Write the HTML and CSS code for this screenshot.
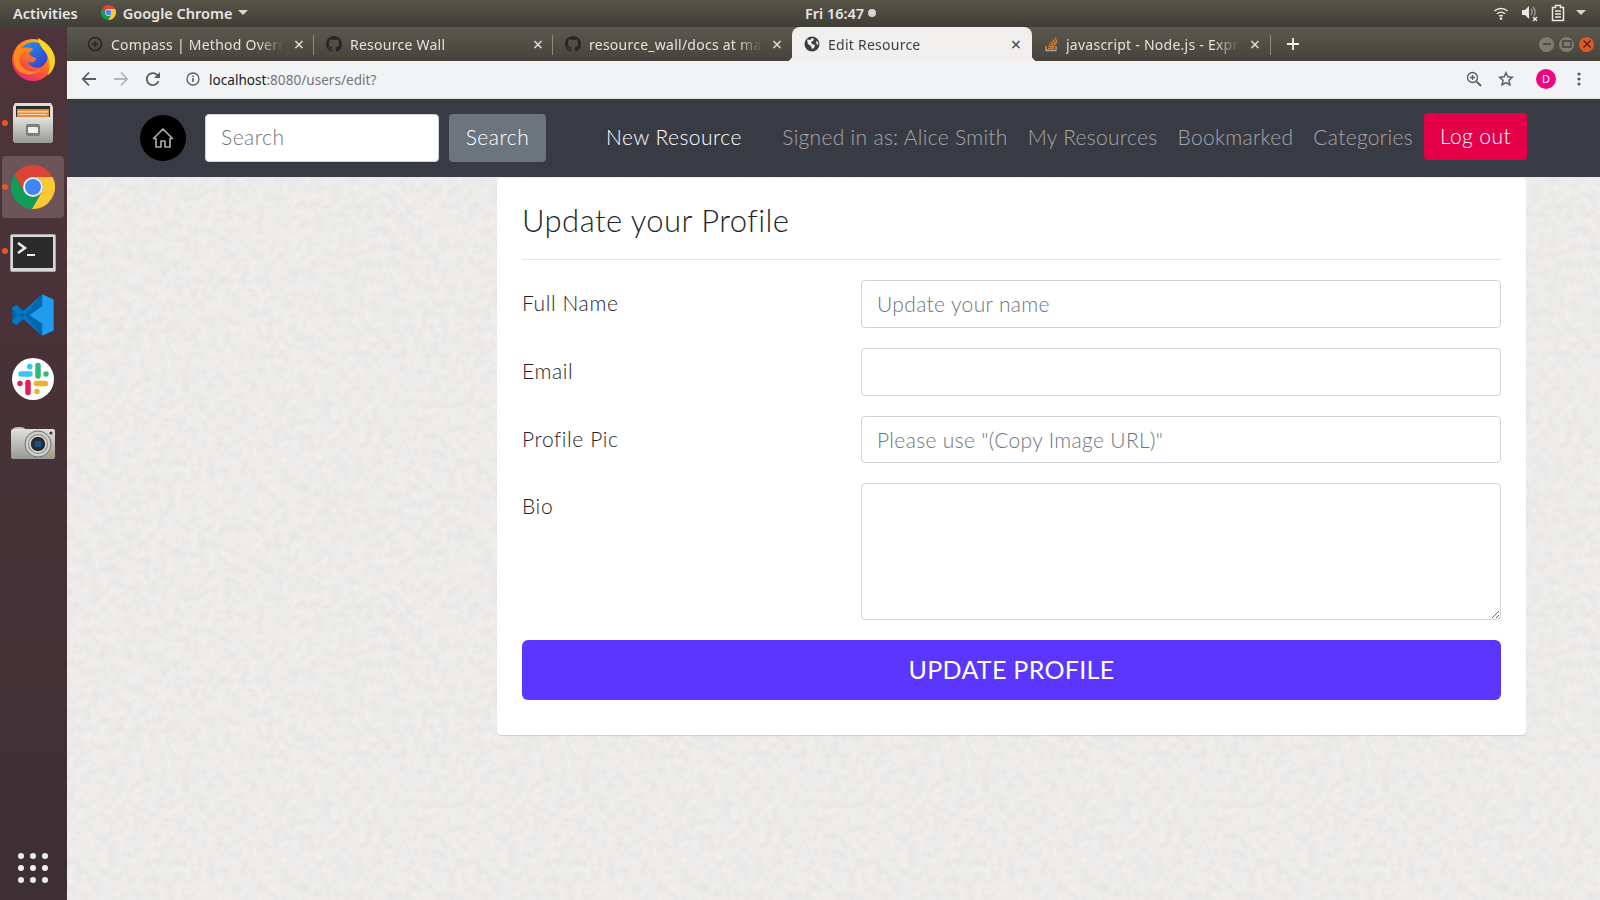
FILE: index.html
```html
<!DOCTYPE html>
<html>
<head>
<title>Edit Resource</title>
<link rel="stylesheet" href="styles.css">
</head>
<body>
	<svg class="defs" width="0" height="0">
		<symbol id="chrome" viewBox="0 0 44 44">
			<path fill="#db4437" d="M41.6 12A22 22 0 0 0 3.54 10.03L13.34 27A10 10 0 0 1 22 12Z"/>
			<path fill="#fcc934" d="M20.86 43.97A22 22 0 0 0 41.6 12L22 12A10 10 0 0 1 30.66 27Z"/>
			<path fill="#0f9d58" d="M3.54 10.03A22 22 0 0 0 20.86 43.97L30.66 27A10 10 0 0 1 13.34 27Z"/>
			<circle cx="22" cy="22" r="10" fill="#f1f1f1"/>
			<circle cx="22" cy="22" r="8" fill="#4285f4"/>
		</symbol>
		<symbol id="github" viewBox="0 0 16 16">
			<path fill="#25262a" d="M8 0C3.58 0 0 3.58 0 8c0 3.54 2.29 6.53 5.47 7.59.4.07.55-.17.55-.38 0-.19-.01-.82-.01-1.49-2.01.37-2.53-.49-2.69-.94-.09-.23-.48-.94-.82-1.13-.28-.15-.68-.52-.01-.53.63-.01 1.08.58 1.23.82.72 1.21 1.87.87 2.33.66.07-.52.28-.87.51-1.07-1.78-.2-3.64-.89-3.64-3.95 0-.87.31-1.59.82-2.15-.08-.2-.36-1.02.08-2.12 0 0 .67-.21 2.2.82.64-.18 1.32-.27 2-.27.68 0 1.36.09 2 .27 1.53-1.04 2.2-.82 2.2-.82.44 1.1.16 1.92.08 2.12.51.56.82 1.27.82 2.15 0 3.07-1.87 3.75-3.65 3.95.29.25.54.73.54 1.48 0 1.07-.01 1.93-.01 2.2 0 .21.15.46.55.38A8.013 8.013 0 0016 8c0-4.42-3.58-8-8-8z"/>
		</symbol>
		<linearGradient id="ffBase" x1="0.8" y1="0" x2="0.2" y2="1">
			<stop offset="0" stop-color="#ffc31a"/>
			<stop offset="0.5" stop-color="#ff6a25"/>
			<stop offset="1" stop-color="#e5207a"/>
		</linearGradient>
		<linearGradient id="ffBlue" x1="0" y1="0" x2="1" y2="1">
			<stop offset="0" stop-color="#1a9cf5"/>
			<stop offset="1" stop-color="#3d34c4"/>
		</linearGradient>
		<linearGradient id="metal" x1="0" y1="0" x2="0" y2="1">
			<stop offset="0" stop-color="#e0e0de"/>
			<stop offset="1" stop-color="#989896"/>
		</linearGradient>
	</svg>

	<div class="topbar">
		<span class="topbar-label activities">Activities</span>
		<svg class="topbar-chrome" width="15" height="15"><use href="#chrome"/></svg>
		<span class="topbar-label">Google Chrome</span>
		<span class="caret"></span>
		<div class="clock"><span class="topbar-label">Fri 16:47</span><span class="clock-dot"></span></div>
		<div class="tray">
			<svg width="16" height="16" viewBox="0 0 16 16" fill="none" stroke="#e9e8e4" stroke-width="1.5">
				<path d="M1.5 6a9.5 9.5 0 0 1 13 0M4 8.8a6 6 0 0 1 8 0M6.2 11.2a3 3 0 0 1 3.6 0"/>
				<circle cx="8" cy="13.6" r="1.3" fill="#e9e8e4" stroke="none"/>
			</svg>
			<svg width="18" height="18" viewBox="0 0 18 18">
				<path fill="#e9e8e4" d="M1 6h3l4-4v13l-4-4H1z"/>
				<path fill="none" stroke="#9b9a94" stroke-width="1.4" d="M10 5a5 5 0 0 1 0 6M12 3a8 8 0 0 1 1 9"/>
				<path fill="none" stroke="#e9e8e4" stroke-width="1.5" d="M12 13l4 4M16 13l-4 4"/>
			</svg>
			<svg width="14" height="18" viewBox="0 0 14 18" fill="none" stroke="#e9e8e4" stroke-width="1.5">
				<path d="M4.5 1.5h5v2h3v13h-11v-13h3z"/>
				<path d="M4 7h6M4 10h6M4 13h6"/>
			</svg>
			<span class="caret tray-caret"></span>
		</div>
	</div>

	<div class="below">
		<aside class="dock">
			<div class="dock-slot">
				<svg width="44" height="44" viewBox="0 0 44 44">
					<circle cx="22" cy="23" r="21" fill="url(#ffBase)"/>
					<path fill="url(#ffBlue)" d="M10 12c5-8 18-9 24-2 5 7 3 17-4 20-6 2-12-1-13-5 4 1 8 0 8-3 0-2-6-2-7-5 0-2 3-3 4-5-4-2-9-2-12 0z"/>
					<path fill="#ffd524" d="M27 1c8 4 17 12 17 22 0 7-3 12-7 15 2-7 2-14-1-20-2-5-8-8-9-17z"/>
					<path fill="#ff8a1c" d="M8 7c1 4 5 5 9 6-3 1-7 3-8 6-2 5 1 11 6 14 5 2 11 2 16-1-6 6-15 7-22 3C2 30 0 18 8 7z"/>
				</svg>
			</div>
			<div class="dock-slot running">
				<svg width="44" height="44" viewBox="0 0 44 44">
					<path fill="#dcdcda" d="M4 2h36l2 4v34l-2 2H4l-2-2V6z"/>
					<rect x="5" y="5" width="34" height="11" fill="#2e2c28"/>
					<rect x="6" y="8" width="32" height="8" fill="#e88b3c"/>
					<path fill="#f6d7a8" d="M7 10h30v1.5H7zM8 13h28v1H8z"/>
					<path fill="url(#metal)" d="M2 17h40v23l-2 2H4l-2-2z"/>
					<rect x="15" y="23" width="14" height="12" rx="2" fill="#7d7d7a"/>
					<rect x="17" y="26" width="10" height="6" rx="1" fill="#eeeeec"/>
				</svg>
			</div>
			<div class="dock-slot running active">
				<svg width="44" height="44"><use href="#chrome"/></svg>
			</div>
			<div class="dock-slot running terminal-slot">
				<svg width="46" height="38" viewBox="0 0 46 38">
					<rect x="0.5" y="0.5" width="45" height="37" rx="1.5" fill="#d8d8d6" stroke="#a9a9a7"/>
					<rect x="3" y="3" width="40" height="31" fill="#2b2b2b"/>
					<path fill="none" stroke="#eee" stroke-width="2.5" d="M8 9l7 5-7 5"/>
					<rect x="17" y="20" width="8" height="2" fill="#eee"/>
				</svg>
			</div>
			<div class="dock-slot">
				<svg width="44" height="44" viewBox="0 0 100 100">
					<path fill="#0065a9" d="M71 3L31 41 13 27 3 33v34l10 6 18-14 40 38 8-12V15z"/>
					<path fill="#007acc" d="M71 3L13 73 3 67v-4l68-60zM71 97L13 27 3 33v4l68 60z"/>
					<path fill="#1f9cf0" d="M71 3l26 12v70L71 97V30L42 50l29 20z"/>
				</svg>
			</div>
			<div class="dock-slot">
				<svg width="44" height="44" viewBox="0 0 44 44" fill="none" stroke-width="5.5" stroke-linecap="round">
					<circle cx="22" cy="22" r="21" fill="#fff" stroke="none"/>
					<path stroke="#36c5f0" d="M10 17h9M18.8 9.6v.1"/>
					<path stroke="#2eb67d" d="M27 8.5V19M35 17v.1"/>
					<path stroke="#ecb22e" d="M25.500 26.500h9M26 34.500v.1"/>
					<path stroke="#e01e5a" d="M17 25.500v10M9 26.500v.1"/>
				</svg>
			</div>
			<div class="dock-slot">
				<svg width="46" height="34" viewBox="0 0 46 34">
					<ellipse cx="9" cy="3" rx="6" ry="2" fill="#c6c6c4"/>
					<rect x="1" y="3" width="44" height="30" rx="2" fill="url(#metal)"/>
					<circle cx="28" cy="18" r="13" fill="#cfcfcd" stroke="#6f6f6d"/>
					<circle cx="28" cy="18" r="10" fill="#8c8c8a"/>
					<circle cx="28" cy="18" r="8" fill="#2b2b2d" stroke="#e4e4e4" stroke-width="1.5"/>
					<rect x="24.500" y="15" width="7" height="6" rx="1" fill="#1b4f8c"/>
					<rect x="39" y="26" width="3" height="3" fill="#e8961c"/>
					<circle cx="41" cy="7" r="1.500" fill="#333"/>
				</svg>
			</div>
			<div class="app-grid">
				<span></span><span></span><span></span>
				<span></span><span></span><span></span>
				<span></span><span></span><span></span>
			</div>
		</aside>

		<div class="browser">
			<div class="tabstrip">
				<div class="tab">
					<svg width="16" height="16" viewBox="0 0 16 16" fill="none" stroke="#25262a" stroke-width="1.500">
						<circle cx="8" cy="8" r="6.500"/>
						<path d="M5 8h6M8 5v6"/>
					</svg>
					<span class="tab-title">Compass | Method Override</span>
					<span class="tab-close">×</span>
				</div>
				<div class="tab">
					<svg width="16" height="16"><use href="#github"/></svg>
					<span class="tab-title">Resource Wall</span>
					<span class="tab-close">×</span>
				</div>
				<div class="tab no-sep">
					<svg width="16" height="16"><use href="#github"/></svg>
					<span class="tab-title">resource_wall/docs at master</span>
					<span class="tab-close">×</span>
				</div>
				<div class="tab tab-active">
					<svg width="16" height="16" viewBox="0 0 16 16">
						<circle cx="8" cy="8" r="7.500" fill="#3c4043"/>
						<path fill="#f0efed" d="M3 3.500l3 .5 2-2 2 1-1 2-2 1 1 2 3 1-1 3-2 1-1-3-3-2zM12 5l2 1 .5 3-2-1z"/>
					</svg>
					<span class="tab-title">Edit Resource</span>
					<span class="tab-close">×</span>
				</div>
				<div class="tab tab-last">
					<svg width="14" height="16" viewBox="1 0 14 16" fill="none" stroke-width="1.300">
						<path stroke="#a9a69d" d="M3 10v4.500h10V10"/>
						<path stroke="#e8761c" d="M5 12.500h6M5.200 10.300l5.800.700M6 8l5.500 1.800M7.500 5.700l5 3M9.500 3.500l3.800 4.500M12 1.500l2 5"/>
					</svg>
					<span class="tab-title">javascript - Node.js - Express</span>
					<span class="tab-close">×</span>
				</div>
				<svg class="new-tab" width="14" height="14" viewBox="0 0 14 14" stroke="#f0efe9" stroke-width="1.800"><path d="M7 1v12M1 7h12"/></svg>
				<div class="window-controls">
					<span class="win-btn">
						<svg width="10" height="10" viewBox="0 0 10 10" stroke="#33322d" stroke-width="1.300"><path d="M1 5h8"/></svg>
					</span>
					<span class="win-btn">
						<svg width="10" height="10" viewBox="0 0 10 10" fill="none" stroke="#33322d" stroke-width="1.200"><rect x="1" y="2" width="8" height="6"/></svg>
					</span>
					<span class="win-btn win-close">
						<svg width="10" height="10" viewBox="0 0 10 10" stroke="#4a2314" stroke-width="1.400"><path d="M1.500 1.500l7 7M8.500 1.500l-7 7"/></svg>
					</span>
				</div>
			</div>

			<div class="toolbar">
				<svg width="16" height="16" viewBox="0 0 16 16" fill="none" stroke="#5a5b5d" stroke-width="1.800"><path d="M15 8H2M8 1.500L1.800 8 8 14.500"/></svg>
				<svg width="16" height="16" viewBox="0 0 16 16" fill="none" stroke="#b4b5b7" stroke-width="1.800"><path d="M1 8h13M8 1.500L14.200 8 8 14.500"/></svg>
				<svg width="16" height="16" viewBox="0 0 16 16" fill="none" stroke="#5a5b5d" stroke-width="1.800"><path d="M13.500 10a6 6 0 1 1-.6-5"/><path fill="#5a5b5d" stroke="none" d="M15 1v6H9z"/></svg>
				<div class="omnibox">
					<svg width="14" height="14" viewBox="0 0 14 14" fill="none" stroke="#5a5b5d" stroke-width="1.300">
						<circle cx="7" cy="7" r="6"/>
						<path stroke-width="1.600" d="M7 6v4M7 3.500v1.500"/>
					</svg>
					<span class="url"><span class="url-host">localhost</span>:8080/users/edit?</span>
				</div>
				<div class="toolbar-right">
					<svg width="16" height="16" viewBox="0 0 16 16" fill="none" stroke="#5a5b5d" stroke-width="1.300">
						<circle cx="6.500" cy="6.500" r="5"/>
						<path d="M4 6.500h5M6.500 4v5"/>
						<path stroke-width="1.800" d="M10.500 10.500l4.500 4.500"/>
					</svg>
					<svg width="16" height="16" viewBox="0 0 16 16" fill="none" stroke="#5a5b5d" stroke-width="1.500"><path d="M8 1.800l1.900 4 4.400.5-3.300 3 .9 4.400L8 11.500l-3.900 2.200.9-4.400-3.300-3 4.400-.5z"/></svg>
					<span class="avatar">D</span>
					<svg width="4" height="16" viewBox="0 0 4 16" fill="#5a5b5d"><circle cx="2" cy="3" r="1.600"/><circle cx="2" cy="8" r="1.600"/><circle cx="2" cy="13" r="1.600"/></svg>
				</div>
			</div>

			<nav class="navbar">
				<a class="home-btn">
					<svg width="24" height="24" viewBox="0 0 24 24" fill="none" stroke="#a8a8a8" stroke-width="1.700" stroke-linejoin="round">
						<path d="M2.500 12.500L12 3l9.500 9.500H19V21h-5v-6h-4v6H5v-8.500z"/>
					</svg>
				</a>
				<input class="nav-search" type="text" placeholder="Search">
				<button class="nav-search-btn" type="button">Search</button>
				<a class="nav-link nav-new">New Resource</a>
				<div class="nav-right">
					<a class="nav-link">Signed in as: Alice Smith</a>
					<a class="nav-link">My Resources</a>
					<a class="nav-link">Bookmarked</a>
					<a class="nav-link">Categories</a>
					<button class="logout-btn" type="button">Log out</button>
				</div>
			</nav>

			<main class="page">
				<section class="card">
					<h3 class="card-title">Update your Profile</h3>
					<form class="profile-form">
						<label class="form-label">Full Name</label>
						<input class="form-input" type="text" placeholder="Update your name">
						<label class="form-label">Email</label>
						<input class="form-input" type="text">
						<label class="form-label">Profile Pic</label>
						<input class="form-input" type="text" placeholder="Please use &quot;(Copy Image URL)&quot;">
						<label class="form-label">Bio</label>
						<textarea class="form-input form-textarea"></textarea>
						<button class="submit-btn" type="button">UPDATE PROFILE</button>
					</form>
				</section>
			</main>
		</div>
	</div>
</body>
</html>
```

FILE: styles.css
```css
* { box-sizing: border-box; }
html, body {
	margin: 0;
	height: 100%;
	overflow: hidden;
}
body {
	display: flex;
	flex-direction: column;
	font-family: Lato, "Open Sans", sans-serif;
}
.defs { position: absolute; }

/* ubuntu top bar */
.topbar {
	height: 27px;
	flex: none;
	display: flex;
	align-items: center;
	position: relative;
	padding: 0 0 2px 13px;
	background: linear-gradient(#575549, #3f3e37);
	color: #e6e5e0;
}
.topbar-label {
	font-family: "Noto Sans", sans-serif;
	font-size: 14.5px;
	font-weight: 600;
	white-space: nowrap;
}
.activities { margin-right: 23px; }
.topbar-chrome { margin-right: 7px; }
.caret {
	width: 0;
	height: 0;
	margin-left: 6px;
	border-left: 5px solid transparent;
	border-right: 5px solid transparent;
	border-top: 5px solid #d8d7d2;
}
.clock {
	position: absolute;
	left: 805px;
	display: flex;
	align-items: center;
	gap: 4px;
}
.clock-dot {
	width: 8px;
	height: 8px;
	border-radius: 50%;
	background: #d5d4d0;
}
.tray {
	margin-left: auto;
	display: flex;
	align-items: center;
	gap: 12px;
	padding-right: 14px;
}
.tray-caret { margin-left: -1px; }

.below {
	flex: 1;
	display: flex;
	min-height: 0;
}

/* launcher */
.dock {
	width: 67px;
	flex: none;
	display: flex;
	flex-direction: column;
	align-items: center;
	padding-right: 1px;
	background: linear-gradient(#4e343a, #3e2f34);
}
.dock-slot {
	width: 62px;
	height: 64px;
	flex: none;
	display: flex;
	align-items: center;
	justify-content: center;
	position: relative;
	border-radius: 4px;
}
.dock-slot.active { background: #6c5458; height: 62px; margin: 1px 0; }
.terminal-slot { padding-top: 3px; }
.running::before {
	content: "";
	position: absolute;
	left: 0;
	top: 50%;
	width: 6px;
	height: 6px;
	margin-top: -3px;
	border-radius: 50%;
	background: #e95420;
}
.app-grid {
	margin-top: auto;
	margin-bottom: 17px;
	display: grid;
	grid-template-columns: repeat(3, 6px);
	gap: 6px;
}
.app-grid span {
	width: 6px;
	height: 6px;
	border-radius: 50%;
	background: #f0eeee;
}

.browser {
	flex: 1;
	min-width: 0;
	display: flex;
	flex-direction: column;
}

/* chrome tabs */
.tabstrip {
	height: 34px;
	flex: none;
	display: flex;
	align-items: stretch;
	padding-left: 8px;
	background: linear-gradient(#5b594f, #45433b);
	font-family: "Noto Sans", sans-serif;
	font-size: 14px;
	letter-spacing: .25px;
	color: #e4e3de;
}
.tab {
	width: 239px;
	flex: none;
	display: flex;
	align-items: center;
	gap: 8px;
	padding: 0 8px 0 12px;
	position: relative;
}
.tab::after {
	content: "";
	position: absolute;
	right: 0;
	top: 8px;
	bottom: 6px;
	width: 1px;
	background: #8d8b80;
}
.tab.no-sep::after { display: none; }
.tab svg { flex: none; }
.tab-title {
	flex: 1;
	min-width: 0;
	overflow: hidden;
	white-space: nowrap;
	-webkit-mask-image: linear-gradient(to right, #000 85%, transparent);
	mask-image: linear-gradient(to right, #000 85%, transparent);
}
.tab-close {
	width: 14px;
	flex: none;
	text-align: center;
	font-size: 18px;
	line-height: 14px;
}
.tab-active {
	width: 240px;
	padding-right: 9px;
	background: #f0efed;
	color: #3c4043;
	border-radius: 8px 8px 0 0;
}
.tab-active::before, .tab-active::after {
	content: "";
	display: block;
	position: absolute;
	top: auto;
	bottom: 0;
	width: 6px;
	height: 6px;
}
.tab-active::before {
	left: -6px;
	background: radial-gradient(circle at 0 0, transparent 6px, #f0efed 6.5px);
}
.tab-active::after {
	right: -6px;
	background: radial-gradient(circle at 100% 0, transparent 6px, #f0efed 6.5px);
}
.tab-last { padding-right: 9px; }
.new-tab {
	margin: auto 0 auto 15px;
}
.window-controls {
	margin-left: auto;
	display: flex;
	align-items: center;
	gap: 3px;
	padding-right: 5px;
}
.win-btn {
	width: 17px;
	height: 17px;
	border-radius: 50%;
	display: flex;
	align-items: center;
	justify-content: center;
	background: #7d7c73;
	border: 1px solid #4a4940;
}
.win-close { background: #e0572a; }

.toolbar {
	height: 37.500px;
	flex: none;
	display: flex;
	align-items: center;
	gap: 16px;
	padding-left: 14px;
	background: #f2f3f4;
	border-bottom: 1px solid #e2e2e0;
	font-family: "Noto Sans", sans-serif;
}
.omnibox {
	display: flex;
	align-items: center;
	gap: 9px;
	margin-left: 9px;
}
.url {
	font-size: 13.6px;
	color: #72757a;
}
.url-host { color: #202124; }
.toolbar-right {
	margin-left: auto;
	display: flex;
	align-items: center;
	gap: 16px;
	padding-right: 19px;
}
.avatar {
	width: 20px;
	height: 20px;
	margin: 0 5px 0 6px;
	border-radius: 50%;
	background: #f0047f;
	color: #fff;
	font-size: 11px;
	line-height: 20px;
	text-align: center;
}

/* site navbar */
.navbar {
	height: 78.500px;
	flex: none;
	display: flex;
	align-items: center;
	padding: 0 73px;
	background: #393b44;
	font-size: 21px;
	font-weight: 300;
}
.home-btn {
	width: 46px;
	height: 46px;
	flex: none;
	margin-right: 19px;
	border-radius: 50%;
	background: #000;
	display: flex;
	align-items: center;
	justify-content: center;
}
.nav-search {
	width: 234px;
	height: 48px;
	margin-right: 10px;
	padding: 0 15px 3px;
	border: 1px solid #ced4da;
	border-radius: 4px;
	font: inherit;
	letter-spacing: .5px;
}
.nav-search::placeholder, .form-input::placeholder { color: #6c757d; opacity: 1; }
.nav-search-btn {
	width: 97px;
	height: 48px;
	padding: 0 0 3px;
	border: none;
	border-radius: 4px;
	background: #6c757d;
	color: #fff;
	font: inherit;
	letter-spacing: .5px;
}
.nav-link {
	padding-bottom: 3px;
	color: rgba(255,255,255,.55);
	white-space: nowrap;
	letter-spacing: .3px;
}
.nav-new {
	margin-left: 60px;
	color: #fff;
	letter-spacing: .45px;
}
.nav-right {
	margin-left: auto;
	display: flex;
	align-items: center;
	gap: 20px;
}
.logout-btn {
	width: 103px;
	height: 47px;
	margin: -3px 0 0 -9px;
	padding: 0 0 2px;
	border: none;
	border-radius: 4px;
	background: #e30049;
	color: #fff;
	font: inherit;
	letter-spacing: .4px;
}

/* page */
.page {
	flex: 1;
	display: flex;
	justify-content: flex-end;
	align-items: flex-start;
	padding: 1px 74px 0 0;
	background-color: #efeeed;
	background-image: url("data:image/svg+xml,%3Csvg xmlns='http://www.w3.org/2000/svg' width='400' height='400'%3E%3Cfilter id='n'%3E%3CfeTurbulence type='fractalNoise' baseFrequency='.12' numOctaves='5' stitchTiles='stitch'/%3E%3CfeColorMatrix values='0 0 0 0 .5 0 0 0 0 .5 0 0 0 0 .5 .3 0 0 0 -.09'/%3E%3C/filter%3E%3Crect width='400' height='400' filter='url(%23n)'/%3E%3C/svg%3E");
}
.card {
	width: 1029px;
	height: 557px;
	padding: 0 25px;
	background: #fff;
	border-radius: 4px;
	box-shadow: 0 1px 1px rgba(0,0,0,.12);
}
.card-title {
	height: 82px;
	margin: 0 0 20px;
	border-bottom: 1px solid #e2e3e4;
	color: #212529;
	font-size: 31px;
	font-weight: 300;
	letter-spacing: .45px;
	line-height: 84px;
}
.profile-form {
	display: grid;
	grid-template-columns: 339px 640px;
	gap: 20px 0;
	font-size: 21px;
	font-weight: 300;
}
.form-label {
	height: 47.800px;
	color: #1f2328;
	letter-spacing: .6px;
	line-height: 46px;
}
.form-input {
	height: 47.800px;
	padding: 0 15px;
	border: 1px solid #ced4da;
	border-radius: 4px;
	font: inherit;
	letter-spacing: .35px;
}
.form-textarea {
	height: 137px;
	padding: 8px 15px;
}
.submit-btn {
	grid-column: 1 / 3;
	height: 60px;
	padding: 0 0 2px;
	border: none;
	border-radius: 6px;
	background: #5a36ff;
	color: #fff;
	font: inherit;
	font-size: 25px;
	font-weight: 400;
	letter-spacing: .3px;
}
```
